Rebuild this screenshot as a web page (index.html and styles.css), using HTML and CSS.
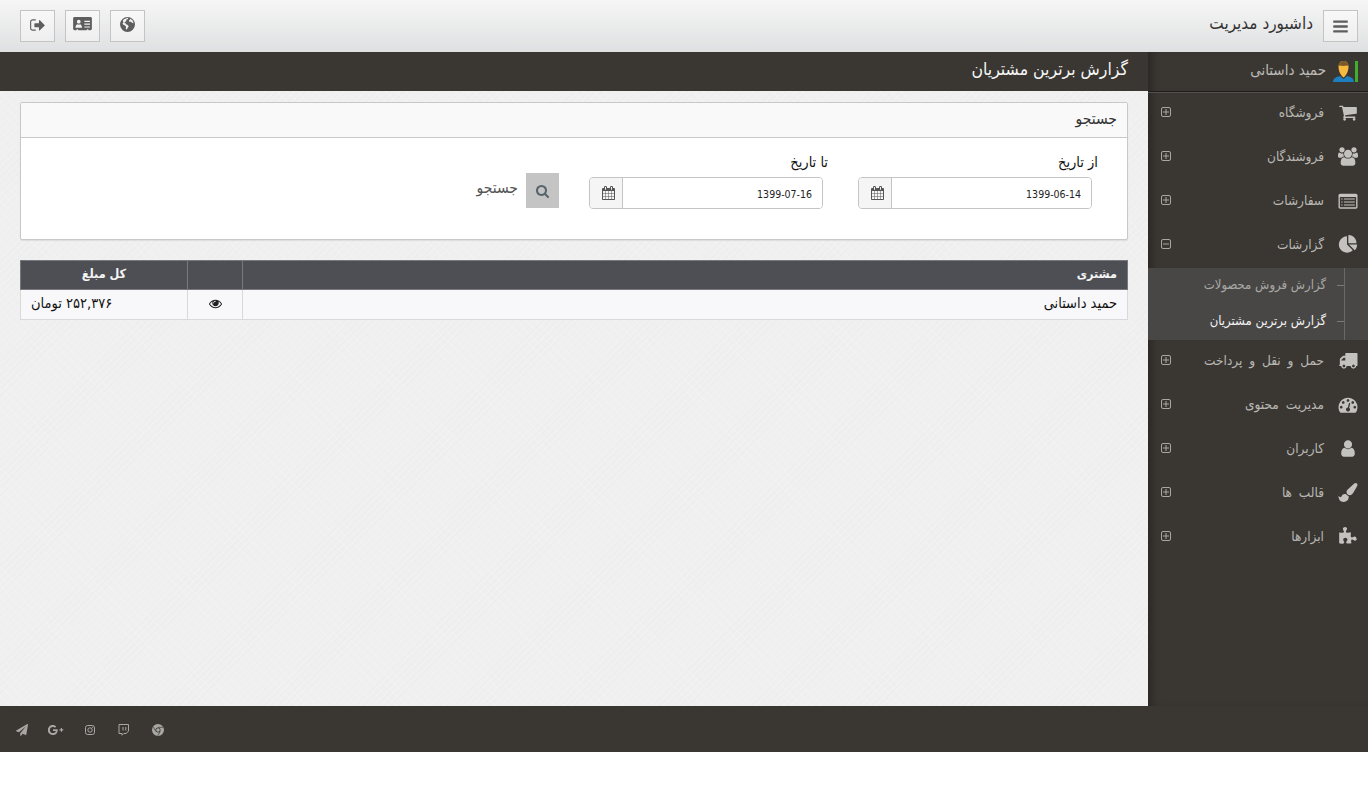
FILE: index.html
```html
<!DOCTYPE html>
<html lang="fa" dir="rtl">
<head>
<meta charset="utf-8">
<title>گزارش برترین مشتریان</title>
<link rel="stylesheet" href="styles.css">
</head>
<body>
<svg class="defs" aria-hidden="true">
  <symbol id="i-bars" viewBox="0 0 1536 1792"><path d="M1536 1344v128q0 26-19 45t-45 19H64q-26 0-45-19t-19-45v-128q0-26 19-45t45-19h1408q26 0 45 19t19 45zm0-512v128q0 26-19 45t-45 19H64q-26 0-45-19t-19-45V832q0-26 19-45t45-19h1408q26 0 45 19t19 45zm0-512v128q0 26-19 45t-45 19H64q-26 0-45-19T0 448V320q0-26 19-45t45-19h1408q26 0 45 19t19 45z"/></symbol>
  <symbol id="i-search" viewBox="0 0 1664 1792"><path d="M1152 832q0-185-131.500-316.500T704 384 387.500 515.500 256 832t131.500 316.500T704 1280t316.500-131.500T1152 832zm512 832q0 52-38 90t-90 38q-54 0-90-38l-343-342q-179 124-399 124-143 0-273.500-55.500t-225-150-150-225T0 832t55.500-273.500 150-225 225-150T704 128t273.500 55.500 225 150 150 225T1408 832q0 220-124 399l343 343q37 37 37 90z"/></symbol>
  <symbol id="i-cart" viewBox="0 0 1664 1792"><path d="M640 1536q0 52-38 90t-90 38-90-38-38-90 38-90 90-38 90 38 38 90zm896 0q0 52-38 90t-90 38-90-38-38-90 38-90 90-38 90 38 38 90zm128-1088v512q0 24-16.500 42.500T1607 1024l-1044 122q13 60 13 70 0 16-24 64h920q26 0 45 19t19 45-19 45-45 19H448q-26 0-45-19t-19-45q0-11 8-31.500t16-36 21.500-40 15.500-29.500L268 384H64q-26 0-45-19T0 320t19-45 45-19h256q16 0 28.500 6.500T368 278t13 24.500 8 26 5.500 29.500 4.500 26h1201q26 0 45 19t19 45z"/></symbol>
  <symbol id="i-users" viewBox="0 0 1920 1792"><path d="M593 896q-162 5-265 128H194q-82 0-138-40.500T0 865q0-353 124-353 6 0 43.500 21t97.500 42.500T384 597q67 0 133-23-5 37-5 66 0 139 81 256zm1071 637q0 120-73 189.500t-194 69.500H523q-121 0-194-69.500T256 1533q0-53 3.500-103.500t14-109T300 1212t43-97.500 62-81 85.500-53.500T602 960q10 0 43 21.500t73 48 107 48 135 21.500 135-21.500 107-48 73-48 43-21.500q61 0 111.500 20t85.500 53.500 62 81 43 97.500 26.500 108.500 14 109 3.500 103.500zM640 256q0 106-75 181t-181 75-181-75-75-181 75-181T384 0t181 75 75 181zm704 384q0 159-112.500 271.500T960 1024 688.500 911.500 576 640t112.500-271.500T960 256t271.500 112.500T1344 640zm576 225q0 78-56 118.500t-138 40.500h-134q-103-123-265-128 81-117 81-256 0-29-5-66 66 23 133 23 59 0 119-21.500t97.500-42.500 43.500-21q124 0 124 353zM1792 256q0 106-75 181t-181 75-181-75-75-181 75-181 181-75 181 75 75 181z"/></symbol>
  <symbol id="i-list" viewBox="0 0 1792 1792"><path fill-rule="evenodd" d="M160 256h1472q66 0 113 47t47 113v1088q0 66-47 113t-113 47H160q-66 0-113-47T0 1504V416q0-66 47-113t113-47zM160 576q-32 0-32 32v896q0 32 32 32h1472q32 0 32-32V608q0-32-32-32zM256 704h128v96H256zm256 0h1024v96H512zM256 992h128v96H256zm256 0h1024v96H512zM256 1280h128v96H256zm256 0h1024v96H512z"/></symbol>
  <symbol id="i-pie" viewBox="0 0 1728 1792"><path d="M768 890l546 546q-106 108-247.500 168T768 1664q-209 0-385.500-103T103 1281.500 0 896t103-385.500T382.500 231 768 128v762zm187 6h773q0 157-60 298.500T1500 1442zm709-128H896V0q209 0 385.500 103T1561 382.500 1664 768z"/></symbol>
  <symbol id="i-truck" viewBox="0 0 1792 1792"><path d="M640 1408q0-52-38-90t-90-38-90 38-38 90 38 90 90 38 90-38 38-90zM256 896h384V640H482q-13 0-22 9L265 844q-9 9-9 22v30zm1280 512q0-52-38-90t-90-38-90 38-38 90 38 90 90 38 90-38 38-90zm256-1088v1024q0 15-4 26.500t-13.500 18.500-16.500 11.500-23.500 6-22.500 2-25.500 0-22.500-.5q0 106-75 181t-181 75-181-75-75-181H768q0 106-75 181t-181 75-181-75-75-181h-64q-3 0-22.500.5t-25.500 0-22.500-2-23.500-6-16.500-11.500-13.500-18.500-4-26.500q0-26 19-45t45-19V896q0-8-.5-35t0-38 2.500-34.500 6.500-37 14-30.500 22.500-30l198-198q19-19 50.500-32t58.500-13h160V256q0-26 19-45t45-19h1024q26 0 45 19t19 45z"/></symbol>
  <symbol id="i-gauge" viewBox="0 0 1792 1792"><path d="M384 1152q0-53-37.500-90.500T256 1024t-90.500 37.500T128 1152t37.500 90.500T256 1280t90.500-37.500T384 1152zm192-448q0-53-37.500-90.500T448 576t-90.500 37.500T320 704t37.500 90.500T448 832t90.500-37.500T576 704zm428 506l101-382q6-26-7.500-48.500T1059 750t-48 6.500-30 39.500l-101 382q-60 5-107 43.500t-63 98.500q-20 77 20 146t117 89 146-20 89-117q16-60-6-117t-72-91zm660-58q0-53-37.500-90.500T1536 1024t-90.500 37.500-37.500 90.500 37.500 90.500 90.500 37.500 90.500-37.500 37.500-90.500zm-640-640q0-53-37.500-90.500T896 384t-90.500 37.500T768 512t37.500 90.500T896 640t90.500-37.500T1024 512zm448 192q0-53-37.500-90.500T1344 576t-90.500 37.500T1216 704t37.500 90.500T1344 832t90.500-37.500T1472 704zm320 448q0 261-141 483-19 29-54 29H195q-35 0-54-29Q0 1414 0 1152q0-182 71-348t191-286 286-191 348-71 348 71 286 191 191 286 71 348z"/></symbol>
  <symbol id="i-user" viewBox="0 0 1408 1792"><path d="M1408 1399q0 109-62.500 187t-150.500 78H341q-88 0-150.500-78T128 1399q0-85 8.500-160.500t31.500-152 58.500-131 94-89T455 832q131 128 313 128t313-128q76 0 134.500 34.500t94 89 58.500 131 31.500 152 8.500 160.500zm-256-887q0 159-112.500 271.500T768 896 496.500 783.500 384 512t112.500-271.500T768 128t271.500 112.500T1152 512z" transform="translate(-64)"/></symbol>
  <symbol id="i-brush" viewBox="0 0 1792 1792"><path d="M1615 0q70 0 122.500 46.500T1790 163q0 63-45 151-332 629-465 752-97 91-218 91-126 0-216.500-92.500T755 845q0-128 92-212l638-579q59-54 130-54zM706 1034q39 76 106.500 130t150.500 76l1 71q4 213-129.500 347T486 1792q-123 0-218-46.500T115.500 1618 29 1435 0 1215q7 5 41 30t62 44.500 59 36.500 46 17q41 0 55-37 25-66 57.500-112.500t69.500-76 88-47.500 103-25.500 125-10.500z"/></symbol>
  <symbol id="i-puzzle" viewBox="0 0 1664 1792"><path d="M1664 1098q0 81-44.500 135t-123.500 54q-41 0-77.500-17.500t-59-38-56.500-38-71-17.500q-110 0-110 124 0 39 16 115t15 115v5q-22 0-33 1-34 3-97.500 11.500T907 1561t-98 5q-61 0-103-26.500T664 1456q0-37 17.500-71t38-56.500 38-59T775 1192q0-79-54-123.500T586 1024q-84 0-143 45.500T384 1197q0 43 15 83t33.500 64.500 33.500 53 15 50.500q0 45-46 89-37 35-117 35-95 0-245-24-9-2-27.500-4t-27.500-4l-13-2q-1 0-3-1-2 0-2-1V512q2 1 17.500 3.500t34 5T42 524q150 24 245 24 80 0 117-35 46-44 46-89 0-22-15-50.500t-33.500-53T368 256t-15-83q0-82 59-127.500T556 0q80 0 134 44.500T744 168q0 41-17.500 77.500t-38 59-38 56.500-17.500 71q0 57 42 83.500T778 542q64 0 180-15t163-17v2q-1 2-3.500 17.500t-5 34-3.500 21.500q-24 150-24 245 0 80 35 117 44 46 89 46 22 0 50.500-15t53-33.500 64.500-33.500 83-15q82 0 127.500 59t45.500 143z"/></symbol>
  <symbol id="i-cal" viewBox="0 0 1664 1792"><path d="M128 1664h288v-288H128v288zm352 0h320v-288H480v288zm-352-352h288V992H128v320zm352 0h320V992H480v320zM128 928h288V640H128v288zm736 736h320v-288H864v288zM480 928h320V640H480v288zm768 736h288v-288h-288v288zm-384-352h320V992H864v320zM512 448V160q0-13-9.500-22.500T480 128h-64q-13 0-22.500 9.500T384 160v288q0 13 9.500 22.500T416 480h64q13 0 22.500-9.500T512 448zm736 864h288V992h-288v320zM864 928h320V640H864v288zm384 0h288V640h-288v288zm32-480V160q0-13-9.500-22.500T1248 128h-64q-13 0-22.500 9.500T1152 160v288q0 13 9.500 22.500t22.500 9.500h64q13 0 22.500-9.500t9.500-22.500zm384-64v1280q0 52-38 90t-90 38H128q-52 0-90-38T0 1664V384q0-52 38-90t90-38h128v-96q0-66 47-113T416 0h64q66 0 113 47t47 113v96h384v-96q0-66 47-113t113-47h64q66 0 113 47t47 113v96h128q52 0 90 38t38 90z"/></symbol>
  <symbol id="i-eye" viewBox="0 0 1792 1792"><path d="M1664 960q-152-236-381-353 61 104 61 225 0 185-131.500 316.500T896 1280t-316.500-131.500T448 832q0-121 61-225-229 117-381 353 133 205 333.500 326.500T896 1408t434.500-121.500T1664 960zM944 576q0-20-14-34t-34-14q-125 0-214.500 89.500T592 832q0 20 14 34t34 14 34-14 14-34q0-86 61-147t147-61q20 0 34-14t14-34zm848 384q0 34-20 69-140 230-376.500 368.500T896 1536t-499.500-139T20 1029Q0 994 0 960t20-69q140-229 376.500-368T896 384t499.500 139T1772 891q20 35 20 69z"/></symbol>
  <symbol id="i-signout" viewBox="0 0 1664 1792"><path d="M640 1440q0 4 1 20t.5 26.500-3 23.500-10 19.500-20.500 6.500H288q-119 0-203.500-84.500T0 1248V544q0-119 84.500-203.500T288 256h320q13 0 22.500 9.500T640 288q0 4 1 20t.5 26.500-3 23.500-10 19.500T608 384H288q-66 0-113 47t-47 113v704q0 66 47 113t113 47h312l11.500 1 11.500 3 8 5.500 7 9 2 13.500zm1024-544q0 26-19 45l-544 544q-19 19-45 19t-45-19-19-45v-288H544q-26 0-45-19t-19-45V768q0-26 19-45t45-19h448V416q0-26 19-45t45-19 45 19l544 544q19 19 19 45z"/></symbol>
  <symbol id="i-card" viewBox="0 0 20 16"><path fill-rule="evenodd" d="M1.500 0h17A1.500 1.500 0 0 1 20 1.500v11a1.500 1.500 0 0 1-1.500 1.500h-2a1 1 0 0 0-2 0h-9a1 1 0 0 0-2 0h-2A1.500 1.500 0 0 1 0 12.500v-11A1.500 1.500 0 0 1 1.500 0zM6 3a2 2 0 1 0 0 4 2 2 0 0 0 0-4zM2.500 11.500h7c0-2-1-3.500-2-3.800a2.600 2.600 0 0 1-3 0c-1 .3-2 1.800-2 3.800zM12 4v1.300h6V4zm0 3v1.300h6V7zm0 3v1.300h6V10z"/></symbol>
  <symbol id="i-globe" viewBox="0 0 16 16"><path fill-rule="evenodd" d="M8 0a8 8 0 1 1 0 16A8 8 0 0 1 8 0zM4.200 2.400 3 4l.8 1.800L2.700 6.500l.6 1.600 2 1 1.200 1.200-.4 2 1 1.300 1.300-2.300.9-1.500-1.400-1.500-1.500-.6-.6-1.300-1 .2.300-1.400 1.500-.8.200-1.700 2-.6-.5-1.300zM10.500 1.600l.2 1.300-1.300 1.200.8 1.300 1.400-.5 1.200 1.300 1.800.4a6.600 6.600 0 0 0-4.100-5z"/></symbol>
  <symbol id="i-plus" viewBox="0 0 10 10"><rect x=".5" y=".5" width="9" height="9" rx="1.500" fill="none" stroke="currentColor"/><path d="M2 5h6M5 2v6" stroke="currentColor" fill="none"/></symbol>
  <symbol id="i-minus" viewBox="0 0 10 10"><rect x=".5" y=".5" width="9" height="9" rx="1.500" fill="none" stroke="currentColor"/><path d="M2 5h6" stroke="currentColor" fill="none"/></symbol>
  <symbol id="i-plane" viewBox="0 0 1792 1792"><path d="M1764 11q33 24 27 64l-256 1536q-5 29-32 45-14 8-31 8-11 0-24-5l-453-185-242 295q-18 23-49 23-13 0-22-4-19-7-30.500-23.500T640 1728v-349l864-1059-1069 925-395-162q-37-14-40-55-2-40 32-59L1696 9q15-9 32-9 20 0 36 11z"/></symbol>
  <symbol id="i-gplus" viewBox="0 0 16 10"><path d="M5 4.200v1.700h2.800C7.500 7.200 6.500 8.100 5 8.100a3.100 3.100 0 1 1 0-6.200c.8 0 1.500.3 2 .8L8.300 1.400A5 5 0 1 0 5 10c3 0 4.900-2.200 4.700-5.800zM14 4.300V3h-1.200v1.300h-1.300v1.200h1.300v1.300H14V5.500h1.300V4.300z"/></symbol>
  <symbol id="i-insta" viewBox="0 0 10 10"><rect x=".5" y=".5" width="9" height="9" rx="2.200" fill="none" stroke="currentColor"/><circle cx="5" cy="5" r="2.200" fill="none" stroke="currentColor"/><circle cx="7.700" cy="2.300" r=".6" fill="currentColor"/></symbol>
  <symbol id="i-twitch" viewBox="0 0 11 12"><path fill="none" stroke="currentColor" d="M1 .5h9.500v6.700L8 9.500H5.700L4 11.200V9.500H1z"/><path d="M4.500 3h1v3.500h-1zM7.300 3h1v3.500h-1z" fill="currentColor"/></symbol>
  <symbol id="i-chrome" viewBox="0 0 12 12"><path fill-rule="evenodd" d="M6 0a6 6 0 1 1 0 12A6 6 0 0 1 6 0zm0 3.500a2.500 2.500 0 1 0 0 5 2.500 2.500 0 0 0 0-5z"/><circle cx="6" cy="6" r="1.800"/><path d="M6 3.300h5.200M3.700 7.300 1.400 3M8.300 7.300 5.700 11.700" stroke="#3a3733" stroke-width=".7"/></symbol>
</svg>

<div class="app">
  <header class="topbar">
    <div class="brand">
      <button class="tool-btn" type="button"><svg class="ic ic-bars"><use href="#i-bars"/></svg></button>
      <span class="brand-title">داشبورد مدیریت</span>
    </div>
    <div class="tools">
      <button class="tool-btn" type="button"><svg class="ic ic-globe"><use href="#i-globe"/></svg></button>
      <button class="tool-btn" type="button"><svg class="ic ic-card"><use href="#i-card"/></svg></button>
      <button class="tool-btn" type="button"><svg class="ic ic-signout"><use href="#i-signout"/></svg></button>
    </div>
  </header>

  <div class="middle">
    <aside class="sidebar">
      <div class="profile">
        <svg class="avatar" viewBox="0 0 25 21">
          <rect x="22" y="0" width="3" height="21" fill="#3fae2a"/>
          <path d="M0 21c.5-4 3-5 7-6l3.500 3 3.500-3c4 1 6.500 2 7 6z" fill="#1e7fc0"/>
          <path d="M5.500 6c0-4 2-6 5-6s5 2 5 6c0 4-2.500 9-5 10.500C8 15 5.500 10 5.500 6z" fill="#f6bb3e"/>
          <path d="M5.500 6c0-4 2-6 5-6s5 2 5 6l-1-1.500c-3 .5-6 .5-8 0z" fill="#7d5a2a"/>
        </svg>
        <span class="profile-name">حمید داستانی</span>
      </div>
      <nav class="menu">
        <div class="menu-item"><svg class="mi"><use href="#i-cart"/></svg><span class="mt">فروشگاه</span><svg class="mx"><use href="#i-plus"/></svg></div>
        <div class="menu-item"><svg class="mi"><use href="#i-users"/></svg><span class="mt">فروشندگان</span><svg class="mx"><use href="#i-plus"/></svg></div>
        <div class="menu-item"><svg class="mi"><use href="#i-list"/></svg><span class="mt">سفارشات</span><svg class="mx"><use href="#i-plus"/></svg></div>
        <div class="menu-item"><svg class="mi"><use href="#i-pie"/></svg><span class="mt">گزارشات</span><svg class="mx"><use href="#i-minus"/></svg></div>
        <div class="submenu">
          <div class="sub-item">گزارش فروش محصولات</div>
          <div class="sub-item active">گزارش برترین مشتریان</div>
        </div>
        <div class="menu-item"><svg class="mi"><use href="#i-truck"/></svg><span class="mt">حمل و نقل و پرداخت</span><svg class="mx"><use href="#i-plus"/></svg></div>
        <div class="menu-item"><svg class="mi"><use href="#i-gauge"/></svg><span class="mt">مدیریت محتوی</span><svg class="mx"><use href="#i-plus"/></svg></div>
        <div class="menu-item"><svg class="mi"><use href="#i-user"/></svg><span class="mt">کاربران</span><svg class="mx"><use href="#i-plus"/></svg></div>
        <div class="menu-item"><svg class="mi"><use href="#i-brush"/></svg><span class="mt">قالب ها</span><svg class="mx"><use href="#i-plus"/></svg></div>
        <div class="menu-item"><svg class="mi"><use href="#i-puzzle"/></svg><span class="mt">ابزارها</span><svg class="mx"><use href="#i-plus"/></svg></div>
      </nav>
    </aside>

    <main class="main">
      <h1 class="page-title">گزارش برترین مشتریان</h1>
      <div class="content">
        <section class="panel">
          <div class="panel-head">جستجو</div>
          <div class="panel-body">
            <div class="field">
              <label class="field-label">از تاریخ</label>
              <div class="date-group">
                <div class="date-input">1399-06-14</div>
                <div class="date-addon"><svg class="ic-cal"><use href="#i-cal"/></svg></div>
              </div>
            </div>
            <div class="field">
              <label class="field-label">تا تاریخ</label>
              <div class="date-group">
                <div class="date-input">1399-07-16</div>
                <div class="date-addon"><svg class="ic-cal"><use href="#i-cal"/></svg></div>
              </div>
            </div>
            <div class="search-wrap">
              <button class="search-btn" type="button"><svg class="ic-search"><use href="#i-search"/></svg></button>
              <span class="search-text">جستجو</span>
            </div>
          </div>
        </section>

        <table class="report">
          <thead>
            <tr><th class="c-name">مشتری</th><th class="c-view"></th><th class="c-total">کل مبلغ</th></tr>
          </thead>
          <tbody>
            <tr>
              <td class="c-name">حمید داستانی</td>
              <td class="c-view"><svg class="ic-eye"><use href="#i-eye"/></svg></td>
              <td class="c-total">۲۵۲,۳۷۶ تومان</td>
            </tr>
          </tbody>
        </table>
      </div>
    </main>
  </div>

  <footer class="footer">
    <svg class="fi fi-chrome"><use href="#i-chrome"/></svg>
    <svg class="fi fi-twitch"><use href="#i-twitch"/></svg>
    <svg class="fi fi-insta"><use href="#i-insta"/></svg>
    <svg class="fi fi-gplus"><use href="#i-gplus"/></svg>
    <svg class="fi fi-plane"><use href="#i-plane"/></svg>
  </footer>
</div>
</body>
</html>
```

FILE: styles.css
```css
* { box-sizing: border-box; }
html, body { margin: 0; padding: 0; background: #fff; }
body {
  font-family: "DejaVu Sans Condensed", "DejaVu Sans", sans-serif;
  font-size: 13px;
  color: #222;
}
.defs { position: absolute; width: 0; height: 0; overflow: hidden; }
svg { fill: currentColor; display: block; }

.app { display: flex; flex-direction: column; height: 752px; }

.topbar {
  height: 52px;
  flex: none;
  display: flex;
  justify-content: space-between;
  align-items: flex-start;
  padding: 10px 10px 0 20px;
  background: linear-gradient(#f6f6f6, #dfe0e1);
}
.brand { display: flex; align-items: flex-start; gap: 10px; }
.brand-title { font-size: 17px; line-height: 26px; color: #333; }
.tools { display: flex; gap: 10px; }
.tool-btn {
  width: 35px;
  height: 32px;
  padding: 0;
  display: flex;
  align-items: center;
  justify-content: center;
  border: 1px solid #c4c4c4;
  background: linear-gradient(#f8f8f8, #eeeeee);
  color: #5e5e5e;
}
.ic-bars { width: 15px; height: 17px; }
.ic-globe { width: 15px; height: 15px; margin-top: -4px; }
.ic-card { width: 19px; height: 15px; margin-top: -4px; }
.ic-signout { width: 15px; height: 16px; margin-top: -3px; }

.middle { flex: 1; display: flex; min-height: 0; }

.sidebar {
  width: 220px;
  flex: none;
  background: #3a3733;
  box-shadow: inset 8px 0 8px -4px rgba(0,0,0,.28);
  color: #b9b7b3;
}
.profile {
  height: 40px;
  display: flex;
  align-items: center;
  gap: 7px;
  padding: 0 10px 3px 0;
  border-bottom: 1px solid #1f1d1b;
  box-shadow: 0 1px 0 #55524d;
}
.avatar { width: 25px; height: 21px; margin-top: 3px; }
.profile-name { font-size: 15px; color: #bdbbb7; }

.menu-item {
  height: 44px;
  display: flex;
  align-items: flex-start;
  padding: 0 10px 0 13px;
  position: relative;
}
.mi { width: 20px; height: 19px; margin-top: 11px; flex: none; color: #c4c2be; }
.mt { flex: 1; margin-right: 14px; line-height: 40px; font-size: 13.5px; word-spacing: 3px; white-space: nowrap; }
.mx { width: 10px; height: 10px; margin-top: 15px; flex: none; color: #a9a7a3; }

.submenu {
  height: 72px;
  background: #484745;
  position: relative;
  padding-right: 42px;
}
.submenu::before {
  content: "";
  position: absolute;
  top: 0;
  bottom: 0;
  right: 23px;
  border-right: 1px solid #6a6966;
}
.sub-item {
  height: 36px;
  line-height: 34px;
  font-size: 13px;
  color: #a9a8a5;
  white-space: nowrap;
  position: relative;
}
.sub-item::after {
  content: "";
  position: absolute;
  right: -18px;
  top: 17px;
  width: 7px;
  border-top: 1px solid #7a7976;
}
.sub-item.active { color: #f4f4f4; }

.main {
  flex: 1;
  min-width: 0;
  background-color: #f0f0f0;
  background-image:
    repeating-linear-gradient(45deg, rgba(255,255,255,.12) 0 1px, transparent 1px 7px),
    repeating-linear-gradient(-45deg, rgba(0,0,0,.01) 0 1px, transparent 1px 5px);
}
.page-title {
  margin: 0;
  height: 39px;
  padding-right: 20px;
  background: #3a3733;
  color: #f5f5f5;
  font-size: 17.5px;
  font-weight: normal;
  line-height: 35px;
}
.content { padding: 11px 20px 0; }

.panel {
  height: 138px;
  background: #fff;
  border: 1px solid #c8c8c8;
  border-radius: 2px;
  box-shadow: 0 1px 1px rgba(0,0,0,.08);
}
.panel-head {
  height: 35px;
  padding-right: 10px;
  line-height: 32px;
  font-size: 15.5px;
  background: #f9f9f9;
  border-bottom: 1px solid #c8c8c8;
  color: #333;
}
.panel-body { display: flex; padding: 14px 29px 0 0; }
.field { width: 270px; flex: none; }
.field-label { display: block; height: 25px; line-height: 20px; font-size: 14.5px; color: #111; }
.date-group {
  width: 234px;
  height: 32px;
  margin-right: 6px;
  display: flex;
  border: 1px solid #c4c4c4;
  border-radius: 4px;
  overflow: hidden;
}
.field + .field .date-group { margin-right: 5px; }
.date-input {
  flex: 1;
  direction: ltr;
  text-align: right;
  padding-right: 10px;
  line-height: 33px;
  font-size: 10.5px;
  color: #222;
  background: #fff;
}
.date-addon {
  width: 33px;
  flex: none;
  display: flex;
  align-items: center;
  justify-content: center;
  background: #f5f5f5;
  border-right: 1px solid #c4c4c4;
  color: #555;
}
.ic-cal { width: 13px; height: 14px; margin: -1px -5px 0 0; }
.search-wrap { display: flex; align-items: flex-start; gap: 8px; margin-top: 21px; margin-right: -1px; }
.search-btn {
  width: 33px;
  height: 35px;
  padding: 0;
  border: 0;
  display: flex;
  align-items: center;
  justify-content: center;
  background: #c4c4c4;
  color: #56636b;
}
.ic-search { width: 13px; height: 14px; }
.search-text { font-size: 15.5px; line-height: 30px; color: #555; }

.report {
  width: 1108px;
  margin-top: 20px;
  border-collapse: collapse;
  table-layout: fixed;
}
.report th, .report td { padding: 0 10px 3px; line-height: 20px; }
.report th {
  height: 29px;
  background: #4d4f54;
  color: #f4f4f4;
  border: 1px solid #77797d;
  font-size: 12.5px;
  font-weight: bold;
  text-align: right;
}
.report td {
  height: 30px;
  background: #f8f8fa;
  border: 1px solid #d9d9d9;
  color: #111;
  font-size: 14.5px;
  text-align: right;
}
.report .c-view { width: 55px; }
.report .c-total { width: 167px; text-align: center; }
.report td.c-total { text-align: left; }
.ic-eye { width: 13px; height: 13px; margin: 0 auto; color: #222; }

.footer {
  height: 46px;
  flex: none;
  background: #3a3733;
  display: flex;
  justify-content: flex-end;
  align-items: center;
  padding: 2px 0 0 16px;
  color: #a9a7a3;
}
.fi { flex: none; }
.fi-plane { width: 12px; height: 12px; }
.fi-gplus { width: 16px; height: 10px; margin-left: 20px; }
.fi-insta { width: 10px; height: 10px; margin-left: 21px; }
.fi-twitch { width: 11px; height: 12px; margin-left: 23px; }
.fi-chrome { width: 12px; height: 12px; margin-left: 23px; }
```
